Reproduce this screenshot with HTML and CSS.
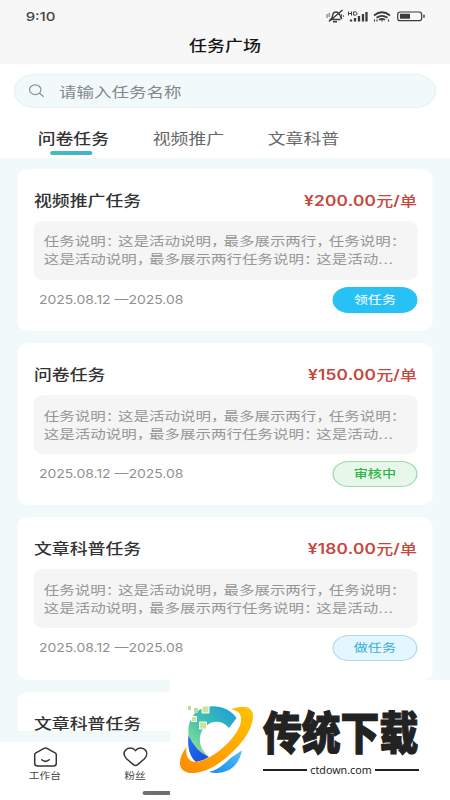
FILE: index.html
```html
<!DOCTYPE html>
<html lang="zh-CN">
<head>
<meta charset="utf-8">
<title>任务广场</title>
<link rel="stylesheet" href="styles.css">
</head>
<body>
<div class="viewport">
<div class="screen">
  <header class="header">
    <div class="status">
      <span class="clock">9:10</span>
      <svg class="status-icons" viewBox="325 8 102 18" preserveAspectRatio="none" fill="none" stroke="#3b3b3b">
        <path d="M329.500 19.500h11M331 19c3-2 0-7 5-7 4 0 4 5 6 7M329 21.500l13.500-11.500M333 21.800h4" stroke-width="1.4"/>
        <path d="M327 14v4M329.200 13v4M341.500 14v4M343.300 15v2" stroke-width=".8"/>
        <path d="M348.500 11.500v4M351.500 11.500v4M348.500 13.500h3M353.500 11.900h2q1.500 0 1.500 1.600t-1.500 1.600h-2z" stroke-width="1"/>
        <path d="M351 21.500v-2M355 21.500v-3.500M359 21.500v-5.500M363 21.500v-7.500M366.500 21.500v-9.500" stroke-width="2.300"/>
        <path d="M374 15.500q8-6.500 16 0M376.500 17.800q5.500-4 11 0M379 19.800q3-2 6 0" stroke-width="1.700"/>
        <path d="M382 19.500v2M374.500 19.500v2M377 19.500v2M388.500 19.500v2" stroke-width="1.200"/>
        <rect x="397.700" y="12" width="24" height="8.700" rx="2.500" stroke-width="1.200"/>
        <path d="M400 13.800h10v5h-10z" fill="#3b3b3b" stroke="none"/>
        <path d="M424 14.800v3" stroke-width="1.400"/>
      </svg>
    </div>
    <h1 class="page-title">任务广场</h1>
  </header>

  <section class="filters">
    <div class="search">
      <svg class="search-icon" viewBox="0 0 16 14" preserveAspectRatio="none" fill="none" stroke="#8b9192" stroke-width="1.200"><ellipse cx="6.500" cy="5.700" rx="5.700" ry="4.900"/><path d="M10.700 9.200l4.300 3.600"/></svg>
      <span>请输入任务名称</span>
    </div>
    <nav class="tabs">
      <span class="tab active">问卷任务</span>
      <span class="tab">视频推广</span>
      <span class="tab">文章科普</span>
    </nav>
  </section>

  <main class="list">
    <article class="card">
      <div class="row"><h2>视频推广任务</h2><b class="price">¥200.00<i>元</i>/<i>单</i></b></div>
      <div class="desc"><p>任务说明<s>：</s>这是活动说明<s>，</s>最多展示两行<s>，</s>任务说明<s>：</s></p><p>这是活动说明<s>，</s>最多展示两行任务说明<s>：</s>这是活动<em>...</em></p></div>
      <div class="row foot"><time>2025.08.12 —2025.08</time><span class="btn primary">领任务</span></div>
    </article>
    <article class="card">
      <div class="row"><h2>问卷任务</h2><b class="price">¥150.00<i>元</i>/<i>单</i></b></div>
      <div class="desc"><p>任务说明<s>：</s>这是活动说明<s>，</s>最多展示两行<s>，</s>任务说明<s>：</s></p><p>这是活动说明<s>，</s>最多展示两行任务说明<s>：</s>这是活动<em>...</em></p></div>
      <div class="row foot"><time>2025.08.12 —2025.08</time><span class="btn review">审核中</span></div>
    </article>
    <article class="card">
      <div class="row"><h2>文章科普任务</h2><b class="price">¥180.00<i>元</i>/<i>单</i></b></div>
      <div class="desc"><p>任务说明<s>：</s>这是活动说明<s>，</s>最多展示两行<s>，</s>任务说明<s>：</s></p><p>这是活动说明<s>，</s>最多展示两行任务说明<s>：</s>这是活动<em>...</em></p></div>
      <div class="row foot"><time>2025.08.12 —2025.08</time><span class="btn todo">做任务</span></div>
    </article>
    <article class="card last">
      <div class="row"><h2>文章科普任务</h2></div>
    </article>
  </main>

  <footer class="tabbar">
    <div class="nav-item">
      <svg viewBox="0 0 26 22" preserveAspectRatio="none" fill="none" stroke="#333" stroke-width="1.500" stroke-linecap="round" stroke-linejoin="round"><path d="M12 2.200q1-.5 2 0l8.600 4.600q1.200.7 1.200 2v8.400q0 2.800-3 2.800H5.200q-3 0-3-2.800V8.800q0-1.300 1.200-2z"/><path d="M9.200 13.800q3.800 3.200 7.600 0"/></svg>
      <span>工作台</span>
    </div>
    <div class="nav-item">
      <svg viewBox="0 0 26 22" preserveAspectRatio="none" fill="none" stroke="#333" stroke-width="1.500" stroke-linejoin="round"><path d="M13 4.600C10.500 1.200 5.300 1.300 2.900 4.300.8 7 1.600 10.300 4 12.700l7.200 6.200q1.800 1.300 3.600 0l7.200-6.200c2.400-2.400 3.200-5.700 1.100-8.400C20.700 1.300 15.500 1.200 13 4.600z"/></svg>
      <span>粉丝</span>
    </div>
  </footer>
  <div class="home-bar"></div>
</div>

<aside class="brand">
  <svg class="brand-logo" viewBox="178 704 78 72">
    <defs>
      <linearGradient id="arc" x1="0" y1="1" x2="1" y2="0"><stop offset="0" stop-color="#a8e88b"/><stop offset=".45" stop-color="#43c3ad"/><stop offset="1" stop-color="#159bdd"/></linearGradient>
      <linearGradient id="ring" x1="0" y1="1" x2="1" y2="0"><stop offset="0" stop-color="#ff8a00"/><stop offset="1" stop-color="#ffc400"/></linearGradient>
      <linearGradient id="deep" x1="0" y1="0" x2="1" y2="1"><stop offset="0" stop-color="#2674f5"/><stop offset="1" stop-color="#1649d8"/></linearGradient>
      <linearGradient id="tail" x1="0" y1="1" x2="1" y2="0"><stop offset="0" stop-color="#168cf2"/><stop offset="1" stop-color="#57bdf7"/></linearGradient>
    </defs>
    <path fill="url(#deep)" d="M188.500 735C187 748 190 757 196 762Q203 761 209 757Q197 751 188.500 735Z"/>
    <path fill="url(#arc)" d="M236.500 718C230 708 216 704 204 707.500C193 712 187 722 188.500 735Q195 751 209 757C202 751 199 744 200 737C202 723 219 716 229 728Z"/>
    <path fill="url(#tail)" d="M209 772Q217 770 224 764Q232 756 242 750.500Q239 764 230 769.500Q219 775 209 772Z"/>
    <path fill="url(#ring)" d="M231 709.500C243 704.500 254 706 253 718C251 735 234 753 217 764.500C199 776 181 776 180 764Q179.500 756 186.500 747C185 758 190 763 199 761.500C210 759 221 750 229 742C237 733 242 725 241 717Q239.500 710 231 709.500Z"/>
    <g fill="#c9e696" stroke="#fff" stroke-width="1"><path d="M202 706h7v7h-7zM199.500 722h7v7h-7z"/><path d="M191.500 716.500h5v5h-5z"/></g>
    <path fill="#b7dfa3" d="M188 706h3v4h-3zM194 708h4v5h-4z"/>
  </svg>
  <div class="brand-copy">
    <div class="brand-name">传统下载</div>
    <div class="brand-url"><span>ctdown.com</span></div>
  </div>
</aside>
</div>
</body>
</html>
```
FILE: styles.css
```css
* { box-sizing: border-box; }
body { margin: 0; }
h1, h2, p { margin: 0; font-weight: 500; }
i, em { font-style: normal; }
s { text-decoration: none; letter-spacing: -0.2em; }

.viewport {
  position: relative;
  width: 450px;
  height: 800px;
  overflow: hidden;
  background: #fff;
}

/* 360px layout, widened to fill the window */
.screen {
  display: flex;
  flex-direction: column;
  width: 360px;
  height: 800px;
  transform: scaleX(1.25);
  transform-origin: 0 0;
  font-family: Inter, "Noto Sans CJK SC", sans-serif;
  color: #333;
  background: #f2f9fa;
}

.header { flex: none; height: 64px; background: #f7f7f7; }
.status {
  display: flex;
  justify-content: space-between;
  align-items: center;
  height: 33px;
  padding: 0 18.400px 0 20.500px;
}
.clock { font-size: 12px; font-weight: 500; letter-spacing: 0; color: #444; }
.status-icons { width: 81.600px; height: 18px; }
.page-title {
  padding-top: 1px;
  font-size: 14.400px;
  line-height: 24px;
  text-align: center;
  color: #161616;
}

.filters { flex: none; height: 94px; padding: 10px 11.200px 0; background: #fff; }
.search {
  display: flex;
  align-items: center;
  gap: 11.600px;
  height: 34px;
  padding-left: 10.600px;
  border: 1px solid #e6f2f4;
  border-radius: 17px;
  background: #f2f9fa;
  font-size: 14px;
  color: #838889;
}
.search-icon { width: 12.800px; height: 14px; }
.tabs { display: flex; gap: 35px; height: 50px; padding: 19px 0 0 19px; }
.tab {
  display: flex;
  flex-direction: column;
  align-items: center;
  font-size: 14.250px;
  line-height: 24px;
  color: #666;
}
.tab.active { font-weight: 500; color: #333; }
.tab.active::after {
  content: "";
  width: 33.600px;
  height: 4px;
  margin: 0 3px 0 0;
  border-radius: 2px;
  background: linear-gradient(90deg, #43bdbb, #42b0d8);
}

.list {
  display: flex;
  flex-direction: column;
  gap: 12px;
  height: 573px;
  padding: 11px 13.600px 0 14.400px;
  overflow: hidden;
}
.card {
  flex: none;
  height: 162.200px;
  padding: 20px 12.800px 0 12.800px;
  border-radius: 9px;
  background: #fff;
}
.card.last { height: 60px; }
.row { display: flex; align-items: center; justify-content: space-between; }
.card h2 { font-size: 14.300px; line-height: 24px; }
.price { font-size: 13.800px; line-height: 24px; font-weight: 600; color: #c9463c; letter-spacing: .2px; }
.price i { font-size: 13.600px; font-weight: 500; letter-spacing: 0; }
.desc {
  height: 59px;
  margin-top: 8px;
  padding: 12.400px 0 0 7.800px;
  border-radius: 8px;
  background: #f5f5f5;
  font-size: 12.400px;
  line-height: 18px;
  color: #969696;
  white-space: nowrap;
}
.desc p { font-weight: 400; }
.desc em { letter-spacing: .5px; }
.foot { height: 26px; margin-top: 7px; padding-left: 4px; }
time { font-size: 11.150px; color: #8f8f8f; white-space: nowrap; }
.btn {
  width: 67.500px;
  height: 26px;
  border: 1px solid;
  border-radius: 13px;
  font-size: 11.300px;
  line-height: 24px;
  text-align: center;
}
.primary { color: #fff; background: #28c1f6; border-color: #28c1f6; }
.review { color: #2fb344; background: #e7f8eb; border-color: #9ed9ab; font-weight: 500; }
.todo { color: #36addb; background: #e4f7fe; border-color: #acdce9; }

.tabbar { display: flex; flex: none; height: 58px; margin-top: 11px; background: #fff; }
.nav-item {
  display: flex;
  flex-direction: column;
  align-items: center;
  width: 72px;
  padding-top: 4px;
  font-size: 8.600px;
  line-height: 16px;
  color: #444;
}
.nav-item svg { width: 20.800px; height: 22px; }
.home-bar {
  position: absolute;
  left: 113.600px;
  bottom: 5px;
  width: 133px;
  height: 4px;
  border-radius: 2px;
  background: #707070;
}

/* banner over the lower right corner */
.brand {
  position: absolute;
  right: 0;
  bottom: 0;
  display: flex;
  width: 280px;
  height: 120px;
  padding: 24px 0 0 8px;
  background: #fff;
}
.brand-logo { flex: none; width: 78px; height: 72px; }
.brand-copy { width: 156px; margin-left: 7px; color: #222; }
.brand-name {
  height: 54px;
  font: 900 38.800px/52px "Noto Sans CJK SC", sans-serif;
  white-space: nowrap;
  transform: scaleY(1.16);
  -webkit-text-stroke: 1px #222;
}
.brand-url {
  display: flex;
  align-items: center;
  gap: 3px;
  font: 10.700px/24px "Noto Sans", sans-serif;
}
.brand-url::before, .brand-url::after { content: ""; flex: 1; height: 2px; background: #222; }
```
